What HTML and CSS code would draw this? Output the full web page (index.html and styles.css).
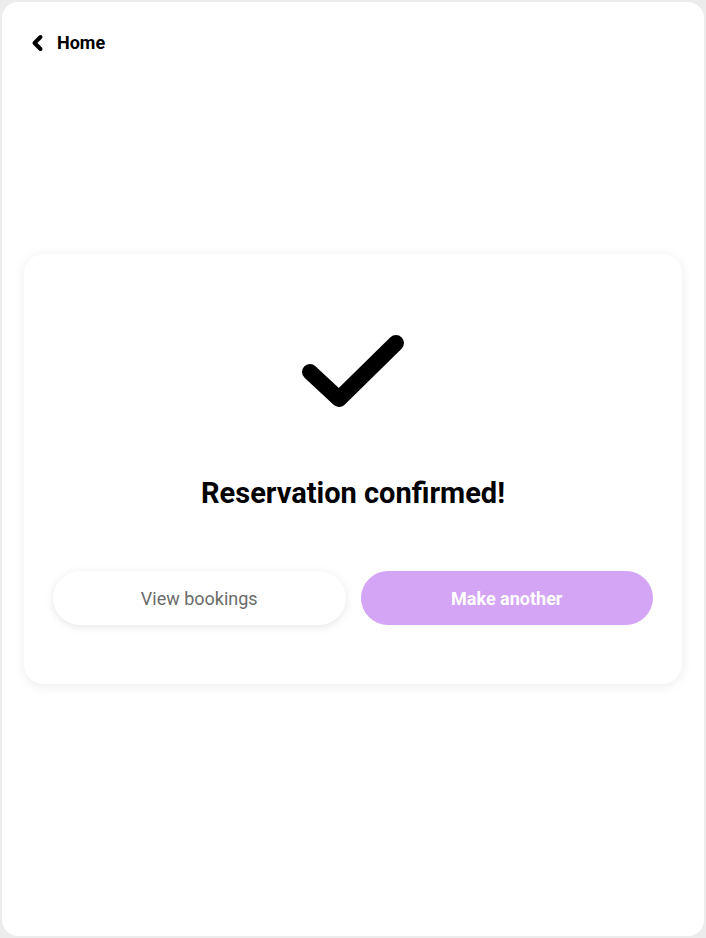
FILE: index.html
```html
<!DOCTYPE html>
<html>
<head>
<meta charset="utf-8">
<link rel="stylesheet" href="styles.css">
</head>
<body>
<div class="panel">
  <header class="top">
    <a class="back" href="#">
      <svg class="chev" width="14" height="18" viewBox="0 0 14 18"><path d="M10.5 3 L4.5 9 L10.5 15" fill="none" stroke="#000" stroke-width="4" stroke-linecap="round" stroke-linejoin="round"/></svg>
      <span>Home</span>
    </a>
  </header>
  <main class="card">
    <svg class="check" width="120" height="90" viewBox="0 0 120 90"><path d="M13 40 L42 67 L99 11" fill="none" stroke="#000" stroke-width="16" stroke-linecap="round" stroke-linejoin="round"/></svg>
    <h1 class="title">Reservation confirmed!</h1>
    <div class="actions">
      <button class="btn ghost">View bookings</button>
      <button class="btn primary">Make another</button>
    </div>
  </main>
</div>
</body>
</html>
```
FILE: styles.css
```css
html, body { margin: 0; padding: 0; }
body {
  background: #ececec;
  font-family: Roboto, "Liberation Sans", sans-serif;
  padding: 2px;
  box-sizing: border-box;
  height: 938px;
}
.panel {
  background: #fff;
  border-radius: 16px;
  height: 934px;
  width: 702px;
  box-sizing: border-box;
  padding: 0 22px;
}
.top {
  padding-top: 30px;
  height: 42px;
}
.back {
  display: inline-flex;
  align-items: center;
  gap: 13px;
  color: #000;
  text-decoration: none;
  font-weight: 700;
  font-size: 18px;
  margin-left: 6px;
}
.card {
  margin-top: 180px;
  height: 430px;
  box-sizing: border-box;
  border-radius: 20px;
  background: #fff;
  box-shadow: 0 2px 12px rgba(0,0,0,0.08);
  padding: 78px 29px 0;
  display: flex;
  flex-direction: column;
  align-items: center;
}
.check { display: block; margin-left: 8px; }
.title {
  margin: 54px 0 0;
  font-size: 29px;
  font-weight: 700;
  color: #000;
  line-height: 34px;
}
.actions {
  margin-top: 61px;
  display: flex;
  gap: 15px;
  width: 100%;
}
.btn {
  flex: 1;
  height: 54px;
  border-radius: 27px;
  border: none;
  font-family: Roboto, "Liberation Sans", sans-serif;
  font-size: 18px;
}
.ghost {
  background: #fff;
  color: #6b6b6b;
  box-shadow: 0 2px 8px rgba(0,0,0,0.1);
}
.primary {
  background: #d4a5f5;
  color: #fff;
  font-weight: 700;
}
```
